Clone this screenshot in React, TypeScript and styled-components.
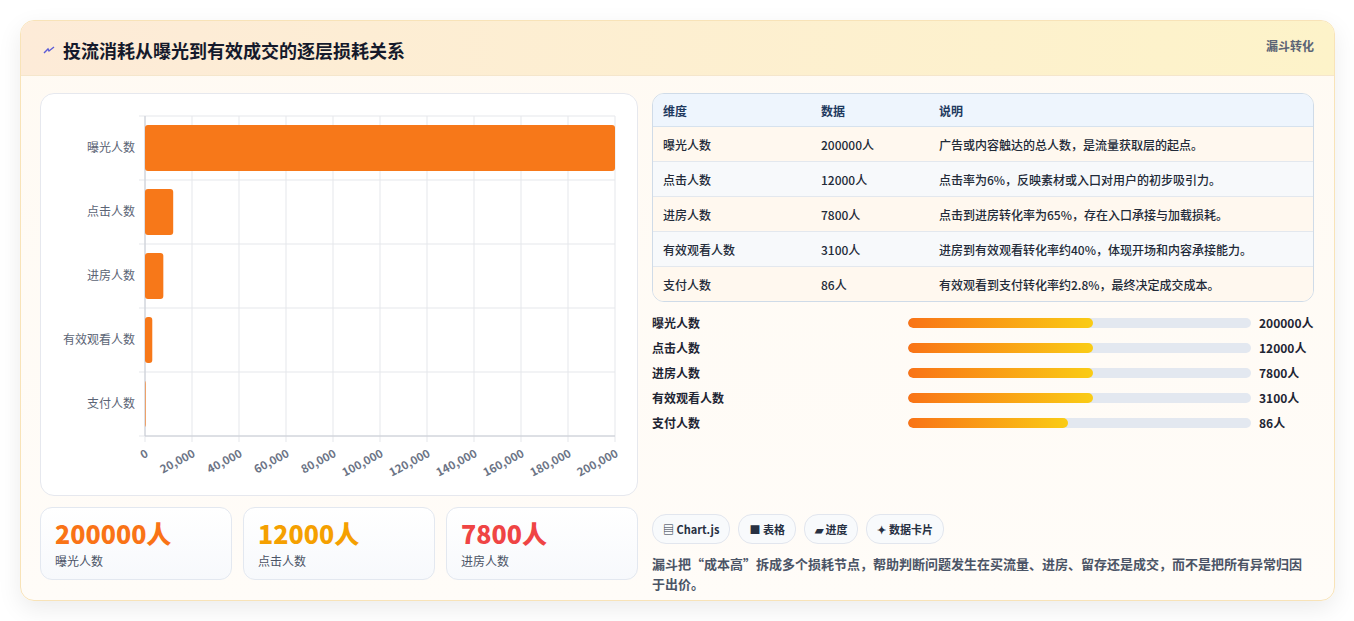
import React from "react";
import styled, { createGlobalStyle } from "styled-components";

const Global = createGlobalStyle`
  body { margin: 0; background: #fff; font-family: "Noto Sans CJK SC", "Noto Sans", sans-serif; }
`;

const Page = styled.div`
  padding: 20px 20px 22px 20px;
  height: 621px;
  box-sizing: border-box;
`;

const Card = styled.section`
  width: 1313px;
  height: 579px;
  border: 1px solid #f8e3b8;
  border-radius: 14px;
  overflow: hidden;
  background: linear-gradient(180deg, #fffaf3, #fffcf8);
  box-shadow: 0 8px 24px rgba(0, 0, 0, 0.08);
  display: flex;
  flex-direction: column;
`;

const Header = styled.header`
  height: 55px;
  flex-shrink: 0;
  background: linear-gradient(90deg, #fdebd8, #fdf3c9);
  border-bottom: 1px solid #f5e6cc;
  display: flex;
  align-items: flex-start;
  justify-content: space-between;
  padding: 0 20px 0 22px;
  box-sizing: border-box;
`;

const Title = styled.h1`
  margin: 16px 0 0;
  font-size: 18px;
  font-weight: 700;
  color: #151a2b;
  display: flex;
  align-items: center;
  gap: 8px;
`;

const Tag = styled.span`
  margin-top: 16px;
  font-size: 12px;
  font-weight: 700;
  color: #5b6475;
`;

const Body = styled.div`
  display: grid;
  grid-template-columns: 598px 662px;
  gap: 14px;
  padding: 17px 18px 0 19px;
`;

const Col = styled.div`
  display: flex;
  flex-direction: column;
  gap: 11px;
`;

const ChartBox = styled.div`
  height: 403px;
  border: 1px solid #e6e8ee;
  border-radius: 14px;
  background: #fff;
  box-sizing: border-box;
`;

const Stats = styled.div`
  display: grid;
  grid-template-columns: repeat(3, 1fr);
  gap: 11px;
`;

const Stat = styled.div`
  height: 73px;
  border: 1px solid #e3e8f0;
  border-radius: 12px;
  background: linear-gradient(180deg, #fff, #f7f9fc);
  padding: 10px 14px;
  box-sizing: border-box;
`;

const StatValue = styled.div<{ $c: string }>`
  font-size: 25px;
  font-weight: 800;
  color: ${(p) => p.$c};
  line-height: 30px;
`;

const StatLabel = styled.div`
  font-size: 12px;
  color: #4b5466;
  margin-top: 4px;
`;

const Table = styled.table`
  width: 100%;
  border-collapse: separate;
  border-spacing: 0;
  border: 1px solid #cfdbe8;
  border-radius: 12px;
  overflow: hidden;
  font-size: 12px;
  th {
    background: #eef5fd;
    color: #1f3a5f;
    text-align: left;
    font-weight: 700;
    height: 32px;
    padding: 0 10px;
    border-bottom: 1px solid #d6e2ee;
  }
  td {
    height: 34px;
    padding: 0 10px;
    color: #222a38;
    font-weight: 500;
    border-bottom: 1px solid #e3e8ee;
  }
  tr:last-child td { border-bottom: none; }
  tbody tr:nth-child(odd) td { background: #fff8ef; }
  tbody tr:nth-child(even) td { background: #f7f9fb; }
`;

const Bars = styled.div`
  display: flex;
  flex-direction: column;
  gap: 9px;
  margin-top: 1px;
`;

const BarRow = styled.div`
  display: grid;
  grid-template-columns: 248px 343px auto;
  gap: 8px;
  align-items: center;
  font-size: 12px;
  font-weight: 600;
  color: #1e2533;
  height: 16px;
`;

const Track = styled.div`
  height: 10px;
  background: #e3e8f0;
  border-radius: 5px;
  overflow: hidden;
`;

const Fill = styled.div`
  height: 100%;
  border-radius: 5px;
  background: linear-gradient(90deg, #f97316, #facc15);
`;

const Chips = styled.div`
  display: flex;
  gap: 8px;
  margin-top: 73px;
`;

const Chip = styled.span`
  height: 28px;
  padding: 0 10px;
  border: 1px solid #e2e6ee;
  border-radius: 14px;
  background: #f8fafc;
  font-size: 11px;
  font-weight: 700;
  color: #273042;
  display: flex;
  align-items: center;
  gap: 3px;
`;

const Note = styled.p`
  margin: 10px 0 0;
  font-size: 13px;
  line-height: 20px;
  color: #4b5466;
  font-weight: 600;
`;

const cats = ["曝光人数", "点击人数", "进房人数", "有效观看人数", "支付人数"];
const vals = [200000, 12000, 7800, 3100, 86];

function Chart() {
  const x0 = 104, w = 470, y0 = 22, rh = 64;
  const sx = (v: number) => (v / 200000) * w;
  return (
    <svg width="596" height="401" style={{ display: "block" }}>
      {Array.from({ length: 11 }).map((_, i) => (
        <line key={i} x1={x0 + i * 47} x2={x0 + i * 47} y1={y0} y2={y0 + 5 * rh + 6} stroke="#e5e7eb" />
      ))}
      {Array.from({ length: 6 }).map((_, i) => (
        <line key={i} x1={x0 - 6} x2={x0 + w} y1={y0 + i * rh} y2={y0 + i * rh} stroke="#e5e7eb" />
      ))}
      <line x1={x0} x2={x0} y1={y0} y2={y0 + 5 * rh} stroke="#c8ccd4" />
      <line x1={x0} x2={x0 + w} y1={y0 + 5 * rh} y2={y0 + 5 * rh} stroke="#c8ccd4" />
      {cats.map((c, i) => (
        <g key={c}>
          <text x={x0 - 10} y={y0 + i * rh + 36} textAnchor="end" fontSize="12" fill="#5b6475">{c}</text>
          <rect x={x0} y={y0 + i * rh + 9} width={Math.max(sx(vals[i]), 0.6)} height={46} rx={3} fill="#f77819" />
        </g>
      ))}
      {Array.from({ length: 11 }).map((_, i) => (
        <text key={i} x={x0 + i * 47 + 4} y={y0 + 5 * rh + 20} textAnchor="end" fontSize="11.5" fontWeight="700" fill="#6b7385"
          transform={`rotate(-28 ${x0 + i * 47 + 4} ${y0 + 5 * rh + 20})`}>
          {(i * 20000).toLocaleString("en-US")}
        </text>
      ))}
    </svg>
  );
}

const rows = [
  ["曝光人数", "200000人", "广告或内容触达的总人数，是流量获取层的起点。"],
  ["点击人数", "12000人", "点击率为6%，反映素材或入口对用户的初步吸引力。"],
  ["进房人数", "7800人", "点击到进房转化率为65%，存在入口承接与加载损耗。"],
  ["有效观看人数", "3100人", "进房到有效观看转化率约40%，体现开场和内容承接能力。"],
  ["支付人数", "86人", "有效观看到支付转化率约2.8%，最终决定成交成本。"],
];

const fills = [54, 54, 54, 54, 46.6];

export default function App() {
  return (
    <Page>
      <Global />
      <Card>
        <Header>
          <Title>
            <svg width="12" height="10" viewBox="0 0 12 10"><path d="M1 8 L5 4 L6 6 L11 2" stroke="#5b5bd6" strokeWidth="1.4" fill="none" /></svg>
            投流消耗从曝光到有效成交的逐层损耗关系
          </Title>
          <Tag>漏斗转化</Tag>
        </Header>
        <Body>
          <Col>
            <ChartBox><Chart /></ChartBox>
            <Stats>
              <Stat><StatValue $c="#f97316">200000人</StatValue><StatLabel>曝光人数</StatLabel></Stat>
              <Stat><StatValue $c="#f5a000">12000人</StatValue><StatLabel>点击人数</StatLabel></Stat>
              <Stat><StatValue $c="#ef4444">7800人</StatValue><StatLabel>进房人数</StatLabel></Stat>
            </Stats>
          </Col>
          <Col>
            <Table>
              <thead>
                <tr><th style={{ width: 138 }}>维度</th><th style={{ width: 98 }}>数据</th><th>说明</th></tr>
              </thead>
              <tbody>
                {rows.map((r) => (
                  <tr key={r[0]}><td>{r[0]}</td><td>{r[1]}</td><td>{r[2]}</td></tr>
                ))}
              </tbody>
            </Table>
            <Bars>
              {rows.map((r, i) => (
                <BarRow key={r[0]}>
                  <span>{r[0]}</span>
                  <Track><Fill style={{ width: `${fills[i]}%` }} /></Track>
                  <span>{r[1]}</span>
                </BarRow>
              ))}
            </Bars>
            <div>
              <Chips>
                <Chip>▤ Chart.js</Chip>
                <Chip>■ 表格</Chip>
                <Chip>▰ 进度</Chip>
                <Chip>✦ 数据卡片</Chip>
              </Chips>
              <Note>漏斗把“成本高”拆成多个损耗节点，帮助判断问题发生在买流量、进房、留存还是成交，而不是把所有异常归因于出价。</Note>
            </div>
          </Col>
        </Body>
      </Card>
    </Page>
  );
}
